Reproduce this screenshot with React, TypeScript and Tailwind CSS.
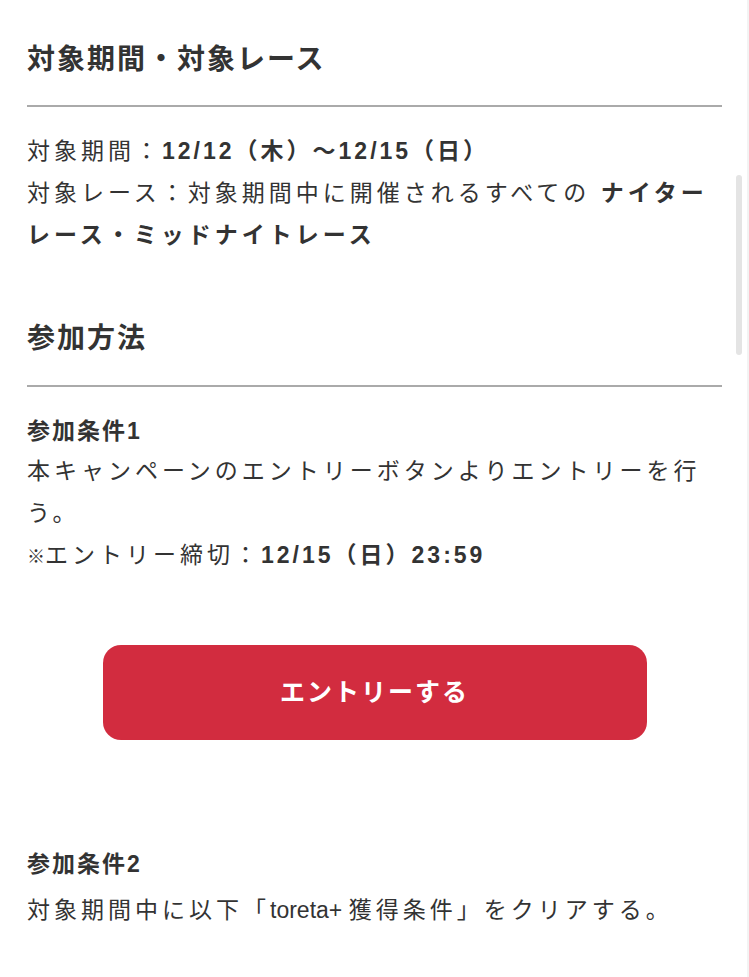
export default function App() {
  return (
    <div className="relative min-h-screen bg-white text-[#333333]">
      <div className="px-[27px] pt-[39px] pb-[40px] font-['Liberation_Sans','Noto_Sans_CJK_JP',sans-serif]">
        {/* 対象期間 */}
        <section>
          <h2 className="text-[28px] leading-[42px] font-bold tracking-[2px]">対象期間・対象レース</h2>
          <hr className="mt-[24px] border-0 border-t-2 border-[#aaaaaa]" />
          <div className="mt-[23px] text-[23px] leading-[42px] tracking-[4px]">
            <p>
              対象期間：<span className="font-bold tracking-[3px]">12/12（木）〜12/15（日）</span>
            </p>
            <p>
              対象レース：対象期間中に開催されるすべての <span className="font-bold">ナイターレース・ミッドナイトレース</span>
            </p>
          </div>
        </section>

        {/* 参加方法 */}
        <section className="mt-[62px]">
          <h2 className="text-[28px] leading-[42px] font-bold tracking-[2px]">参加方法</h2>
          <hr className="mt-[25px] border-0 border-t-2 border-[#aaaaaa]" />

          <div className="mt-[23px] text-[23px] leading-[42px] tracking-[4px]">
            <h3 className="font-bold tracking-[2px] text-[23px]">参加条件1</h3>
            <p className="-mt-[2px]">本キャンペーンのエントリーボタンよりエントリーを行う。</p>
            <p>
              <span className="text-[18px] tracking-normal">※</span>エントリー締切：<span className="font-bold tracking-[3px]">12/15（日）23:59</span>
            </p>
          </div>

          <div className="mt-[67px] flex justify-center">
            <button className="w-[544px] h-[95px] rounded-[18px] bg-[#d22c3f] text-white text-[25px] font-bold tracking-[2px]">
              エントリーする
            </button>
          </div>

          <div className="mt-[103px] text-[23px] leading-[42px] tracking-[4px]">
            <h3 className="font-bold tracking-[2px] text-[23px]">参加条件2</h3>
            <p className="mt-[4px]">
              対象期間中に以下「<span className="tracking-normal">toreta+ </span>獲得条件」をクリアする。
            </p>
          </div>
        </section>
      </div>

      {/* scroll indicator */}
      <div className="absolute left-[736px] top-[175px] h-[180px] w-[6px] rounded-full bg-[#e4e4e4]" />
      <div className="absolute right-0 top-0 h-full w-[2px] bg-[#f3f3f3]" />
    </div>
  );
}
